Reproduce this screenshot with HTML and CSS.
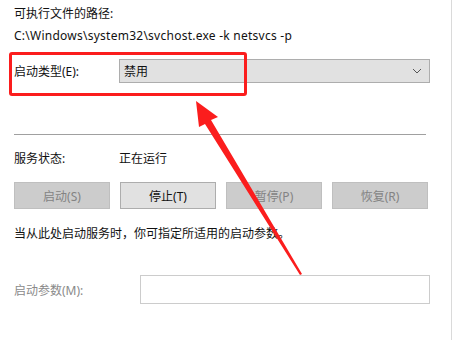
FILE: index.html
```html
<!DOCTYPE html>
<html lang="zh-CN">
<head>
    <meta charset="UTF-8">
    <title>服务属性</title>
    <link rel="stylesheet" href="styles.css">
</head>
<body>
    <div class="dialog">
        <div class="path-label">可执行文件的路径:</div>
        <div class="path-value">C:\Windows\system32\svchost.exe -k netsvcs -p</div>

        <div class="row startup-row">
            <label class="row-label">启动类型(E):</label>
            <div class="select">
                <span>禁用</span>
                <svg class="chevron" width="10" height="6" viewBox="0 0 10 6">
                    <polyline points="1,1 5,5 9,1" fill="none" stroke="#555" stroke-width="1"/>
                </svg>
            </div>
        </div>

        <div class="divider"></div>

        <div class="row status-row">
            <span class="row-label">服务状态:</span>
            <span>正在运行</span>
        </div>

        <div class="buttons">
            <button class="btn" disabled>启动(S)</button>
            <button class="btn">停止(T)</button>
            <button class="btn" disabled>暂停(P)</button>
            <button class="btn" disabled>恢复(R)</button>
        </div>

        <div class="hint">当从此处启动服务时，你可指定所适用的启动参数。</div>

        <div class="row param-row">
            <label class="row-label param-label">启动参数(M):</label>
            <div class="input"></div>
        </div>

        <!-- annotation -->
        <div class="highlight"></div>
        <svg class="arrow" width="453" height="340" viewBox="0 0 453 340">
            <polygon points="196,101 218,117 211,120 302,274 300,275 205,124 199,127" fill="#fb1d1d"/>
        </svg>
    </div>
</body>
</html>
```

FILE: styles.css
```css
* {
    margin: 0;
    padding: 0;
    box-sizing: border-box;
}

body {
    font-family: "Noto Sans", "Noto Sans CJK SC", sans-serif;
    font-size: 12px;
    color: #111;
    background: #fff;
}

.dialog {
    position: relative;
    width: 452px;
    height: 340px;
    padding: 6px 0 0 14px;
    border-right: 1px solid #dadada;
}

.path-label {
    line-height: 16px;
}

.path-value {
    line-height: 16px;
    margin-top: 6px;
    letter-spacing: 0.25px;
}

.row {
    display: flex;
    align-items: center;
}

.row-label {
    width: 105px;
}

.startup-row {
    margin-top: 15px;
}

.select {
    width: 311px;
    height: 24px;
    background: #e1e1e1;
    border: 1px solid #adadad;
    display: flex;
    align-items: center;
    justify-content: space-between;
    padding: 0 7px 0 4px;
}

.divider {
    width: 412px;
    height: 1px;
    background: #a0a0a0;
    margin-top: 51px;
}

.status-row {
    margin-top: 16px;
    line-height: 16px;
}

.buttons {
    display: flex;
    gap: 10px;
    margin-top: 15px;
}

.btn {
    width: 96px;
    height: 27px;
    font-family: inherit;
    font-size: 12px;
    color: #111;
    background: #e1e1e1;
    border: 1px solid #adadad;
}

.btn:disabled {
    background: #cccccc;
    border-color: #bfbfbf;
    color: #838383;
}

.hint {
    margin-top: 17px;
    line-height: 16px;
}

.param-row {
    margin-top: 33px;
}

.param-label {
    width: 126px;
    color: #8a8a8a;
}

.input {
    width: 290px;
    height: 29px;
    border: 1px solid #cccccc;
}

.highlight {
    position: absolute;
    left: 9px;
    top: 52px;
    width: 238px;
    height: 44px;
    border: 3px solid #fb1d1d;
    border-radius: 3px;
}

.arrow {
    position: absolute;
    left: 0;
    top: 0;
}
```
